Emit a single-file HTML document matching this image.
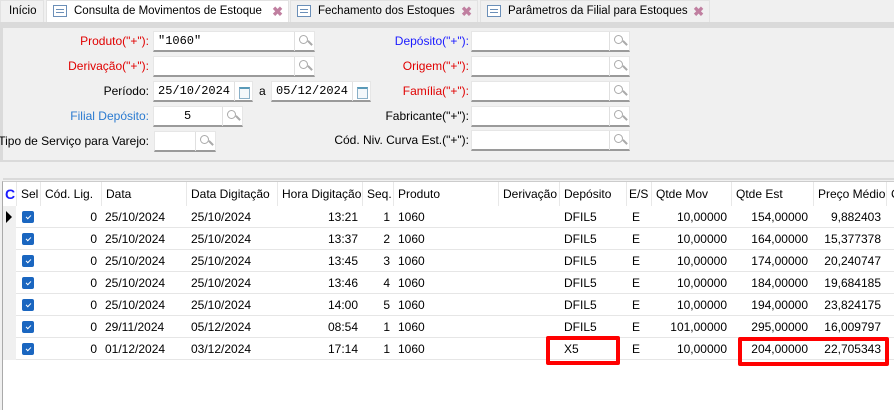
<!DOCTYPE html>
<html><head><meta charset="utf-8"><style>
*{box-sizing:border-box;margin:0;padding:0}
body{width:894px;height:410px;overflow:hidden;background:#f0f0f0;font-family:"Liberation Sans",sans-serif;font-size:12px;color:#000;position:relative}
.a{position:absolute;white-space:nowrap}
.tab{position:absolute;top:0;height:22px;background:#f0f0f0;border:1px solid #e2e2e2;border-bottom:none;line-height:21px;padding-left:8px;white-space:nowrap;font-size:11.5px}
.ti{position:absolute;top:4px;width:14px;height:12px;border:1px solid #6b8fb8;background:#fff}
.ti:before{content:"";position:absolute;left:2px;top:3px;width:8px;height:1px;background:#6b8fb8;box-shadow:0 3px 0 #6b8fb8}
.x{position:absolute;top:0;right:5px;color:#c07fa0;font-size:13px;font-weight:bold}
.lbl{position:absolute;text-align:right;line-height:21px;white-space:nowrap}
.in{position:absolute;height:21px;background:#fff;border:1px solid #e6e6e6;border-bottom:2px solid #9a9a9a;font-family:"Liberation Mono",monospace;font-size:12px;line-height:19px;padding-left:4px}
.mg{position:absolute;right:0;top:0;width:20px;height:19px;border-left:1px solid #e0e0e0}
.mg:before{content:"";position:absolute;left:4px;top:3px;width:7px;height:7px;border:1.5px solid #aaa;border-radius:50%}
.mg:after{content:"";position:absolute;left:12px;top:10px;width:6px;height:2px;background:#aaa;transform:rotate(45deg)}
.cal{position:absolute;right:0;top:0;width:18px;height:19px;border-left:1px solid #e0e0e0}
.cal:before{content:"";position:absolute;left:4px;top:5px;width:9px;height:9px;border:1px solid #8ab0c8;border-top:2px solid #5a9ab8;background:#f4f8fb}
.grid{position:absolute;left:2px;top:181px;width:892px;height:229px;background:#fff;border-left:1px solid #aaa;border-top:1px solid #ccc}
.ind{position:absolute;left:0;top:24px;width:13px;height:154px;background:#f0f0f0}
.h{position:absolute;top:0;height:24px;line-height:24px;padding-left:4px;border-right:1px solid #e8e8e8;white-space:nowrap}
.row{position:absolute;left:14px;width:878px;height:22px;border-bottom:1px solid #e6e6e6}
.c{position:absolute;line-height:22px;white-space:nowrap}
.r{text-align:right}
.cb{position:absolute;left:6px;top:5px;width:12px;height:12px;background:#1a66c0;border-radius:2px}
.cb:after{content:"";position:absolute;left:4px;top:4px;width:4px;height:2px;border-left:1px solid #fff;border-bottom:1px solid #fff;transform:rotate(-45deg)}
.box{position:absolute;border:4px solid #f00;border-radius:2px}
</style></head><body>
<div class="tab" style="left:0;width:44px">Início</div>
<div class="tab" style="left:46px;width:243px;background:#fff;padding-left:27px"><span class="ti" style="left:6px"></span>Consulta de Movimentos de Estoque<span class="x">✖</span></div>
<div class="tab" style="left:290px;width:188px;padding-left:27px"><span class="ti" style="left:6px"></span>Fechamento dos Estoques<span class="x">✖</span></div>
<div class="tab" style="left:480px;width:230px;padding-left:27px"><span class="ti" style="left:6px"></span>Parâmetros da Filial para Estoques<span class="x">✖</span></div>
<div class="a" style="left:0;top:22px;width:894px;height:6px;background:#dadada"></div>
<div class="a" style="left:0;top:28px;width:3px;height:132px;background:#dadada"></div>
<div class="a" style="left:0;top:160px;width:894px;height:2px;background:#dadada"></div>
<div class="a" style="left:3px;top:178px;width:891px;height:2px;background:#dadada"></div>

<div class="lbl" style="left:0;width:149px;top:31px;color:#e00000">Produto("+"):</div>
<div class="lbl" style="left:0;width:149px;top:56px;color:#e00000">Derivação("+"):</div>
<div class="lbl" style="left:0;width:149px;top:81px">Período:</div>
<div class="lbl" style="left:0;width:149px;top:106px;color:#2a7ad0">Filial Depósito:</div>
<div class="lbl" style="left:-60px;width:209px;top:131px">Tipo de Serviço para Varejo:</div>
<div class="in" style="left:153px;top:31px;width:162px">"1060"<span class="mg"></span></div>
<div class="in" style="left:153px;top:56px;width:162px"><span class="mg"></span></div>
<div class="in" style="left:153px;top:81px;width:100px">25/10/2024<span class="cal"></span></div>
<div class="a" style="left:259px;top:84px">a</div>
<div class="in" style="left:271px;top:81px;width:100px">05/12/2024<span class="cal"></span></div>
<div class="in" style="left:153px;top:106px;width:90px;padding-left:30px">5<span class="mg"></span></div>
<div class="in" style="left:154px;top:131px;width:62px"><span class="mg"></span></div>

<div class="lbl" style="left:300px;width:169px;top:31px;color:#1a1aff">Depósito("+"):</div>
<div class="lbl" style="left:300px;width:169px;top:56px;color:#e00000">Origem("+"):</div>
<div class="lbl" style="left:300px;width:169px;top:81px;color:#e00000">Família("+"):</div>
<div class="lbl" style="left:300px;width:169px;top:106px">Fabricante("+"):</div>
<div class="lbl" style="left:300px;width:169px;top:130px">Cód. Niv. Curva Est.("+"):</div>
<div class="in" style="left:471px;top:31px;width:159px"><span class="mg"></span></div>
<div class="in" style="left:471px;top:56px;width:159px"><span class="mg"></span></div>
<div class="in" style="left:471px;top:81px;width:159px"><span class="mg"></span></div>
<div class="in" style="left:471px;top:106px;width:159px"><span class="mg"></span></div>
<div class="in" style="left:471px;top:130px;width:159px"><span class="mg"></span></div>

<div class="grid">
<div class="h" style="left:0;width:14px;padding-left:2px;color:#1a1aff;font-weight:bold;font-size:14px">C</div>
<div class="h" style="left:14px;width:24px">Sel</div>
<div class="h" style="left:38px;width:61px">Cód. Lig.</div>
<div class="h" style="left:99px;width:85px">Data</div>
<div class="h" style="left:184px;width:91px">Data Digitação</div>
<div class="h" style="left:275px;width:85px">Hora Digitação</div>
<div class="h" style="left:360px;width:31px">Seq.</div>
<div class="h" style="left:391px;width:105px">Produto</div>
<div class="h" style="left:496px;width:61px">Derivação</div>
<div class="h" style="left:557px;width:67px">Depósito</div>
<div class="h" style="left:624px;width:25px;padding-left:2px">E/S</div>
<div class="h" style="left:649px;width:80px">Qtde Mov</div>
<div class="h" style="left:729px;width:82px">Qtde Est</div>
<div class="h" style="left:811px;width:73px">Preço Médio</div>
<div class="h" style="left:884px;width:10px">C</div>
<div class="ind"></div>
<div class="a" style="left:3px;top:29px;width:0;height:0;border-left:6px solid #000;border-top:6px solid transparent;border-bottom:6px solid transparent"></div>
</div>
<div id="rows"></div>
<div class="box" style="left:546px;top:336px;width:74px;height:29px"></div>
<div class="box" style="left:738px;top:337px;width:151px;height:29px"></div>
<script>
var d=[["0","25/10/2024","25/10/2024","13:21","1","DFIL5","10,00000","154,00000","9,882403"],
["0","25/10/2024","25/10/2024","13:37","2","DFIL5","10,00000","164,00000","15,377378"],
["0","25/10/2024","25/10/2024","13:45","3","DFIL5","10,00000","174,00000","20,240747"],
["0","25/10/2024","25/10/2024","13:46","4","DFIL5","10,00000","184,00000","19,684185"],
["0","25/10/2024","25/10/2024","14:00","5","DFIL5","10,00000","194,00000","23,824175"],
["0","29/11/2024","05/12/2024","08:54","1","DFIL5","101,00000","295,00000","16,009797"],
["0","01/12/2024","03/12/2024","17:14","1","X5","10,00000","204,00000","22,705343"]];
var h="";
d.forEach(function(r,i){var t=206+i*22;
h+='<div class="row" style="left:16px;top:'+t+'px"><span class="cb"></span>'+
'<span class="c r" style="left:24px;width:57px">'+r[0]+'</span>'+
'<span class="c" style="left:89px">'+r[1]+'</span>'+
'<span class="c" style="left:175px">'+r[2]+'</span>'+
'<span class="c r" style="left:261px;width:81px">'+r[3]+'</span>'+
'<span class="c r" style="left:346px;width:28px">'+r[4]+'</span>'+
'<span class="c" style="left:382px">1060</span>'+
'<span class="c" style="left:548px">'+r[5]+'</span>'+
'<span class="c" style="left:616px">E</span>'+
'<span class="c r" style="left:635px;width:76px">'+r[6]+'</span>'+
'<span class="c r" style="left:715px;width:77px">'+r[7]+'</span>'+
'<span class="c r" style="left:797px;width:68px">'+r[8]+'</span></div>';});
document.getElementById('rows').innerHTML=h;
</script>
</body></html>
